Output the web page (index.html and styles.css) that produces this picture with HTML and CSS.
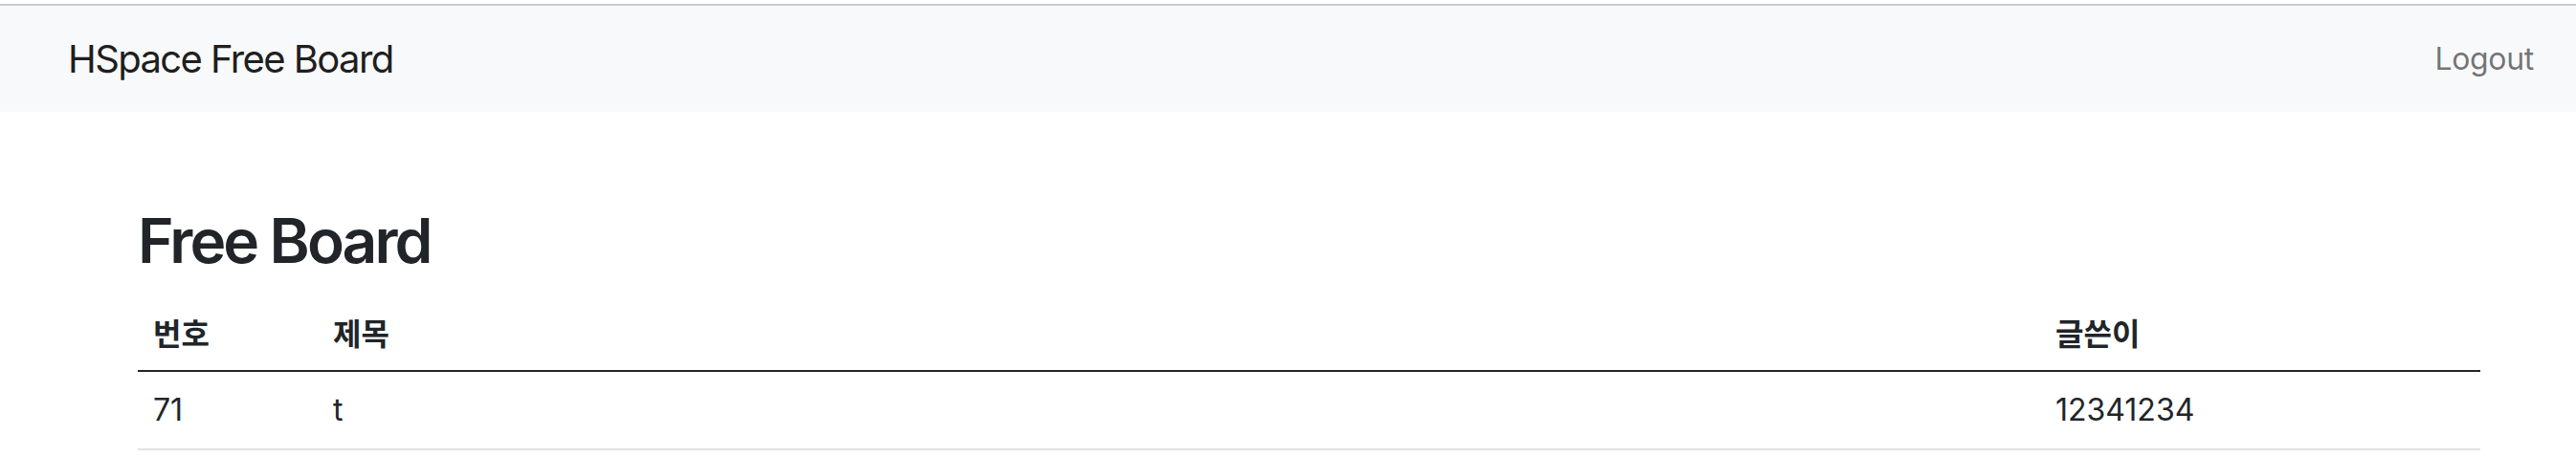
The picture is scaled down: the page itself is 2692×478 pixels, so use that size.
FILE: index.html
```html
<!DOCTYPE html>
<html lang="ko">
<head>
    <meta charset="UTF-8">
    <meta name="viewport" content="width=device-width, initial-scale=1.0">
    <title>HSpace Free Board</title>
    <link rel="stylesheet" href="styles.css">
</head>
<body>
    <nav class="navbar">
        <a class="brand" href="#">HSpace Free Board</a>
        <a class="nav-link" href="#">Logout</a>
    </nav>

    <main class="container">
        <h2>Free Board</h2>
        <table class="board">
            <colgroup>
                <col class="col-no">
                <col class="col-title">
                <col class="col-author">
            </colgroup>
            <thead>
                <tr>
                    <th>번호</th>
                    <th>제목</th>
                    <th>글쓴이</th>
                </tr>
            </thead>
            <tbody>
                <tr>
                    <td>71</td>
                    <td>t</td>
                    <td>12341234</td>
                </tr>
            </tbody>
        </table>
    </main>
</body>
</html>
```

FILE: styles.css
```css
body {
    font-family: Inter, "Noto Sans CJK KR", sans-serif;
    margin: 0;
    padding-top: 4px;
    background-color: white;
    color: #212529;
}
a {
    text-decoration: none;
}
.navbar {
    display: flex;
    align-items: center;
    justify-content: space-between;
    height: 111px;
    padding: 0 44px 0 71px;
    border-top: 2px solid #cbcbcb;
    background-color: #f8f9fa;
}
.brand {
    font-size: 40px;
    letter-spacing: -0.04em;
    color: rgba(0,0,0,0.9);
}
.nav-link {
    font-size: 32px;
    letter-spacing: -0.01em;
    color: rgba(0,0,0,0.55);
}
.container {
    margin-top: 97px;
    padding: 0 100px 0 144px;
}
h2 {
    margin: 0 0 16px;
    font-size: 64px;
    font-weight: 600;
    letter-spacing: -0.045em;
    line-height: 1.2;
}
.board {
    width: 100%;
    border-collapse: collapse;
    font-size: 32px;
    line-height: 48px;
}
.col-no {
    width: 188px;
}
.col-author {
    width: 460px;
}
.board th, .board td {
    padding: 16px;
    text-align: left;
}
.board th {
    font-family: "Noto Sans CJK KR", sans-serif;
    font-weight: 700;
    border-bottom: 2px solid #212529;
}
.board td {
    border-bottom: 2px solid #dee2e6;
}
```
